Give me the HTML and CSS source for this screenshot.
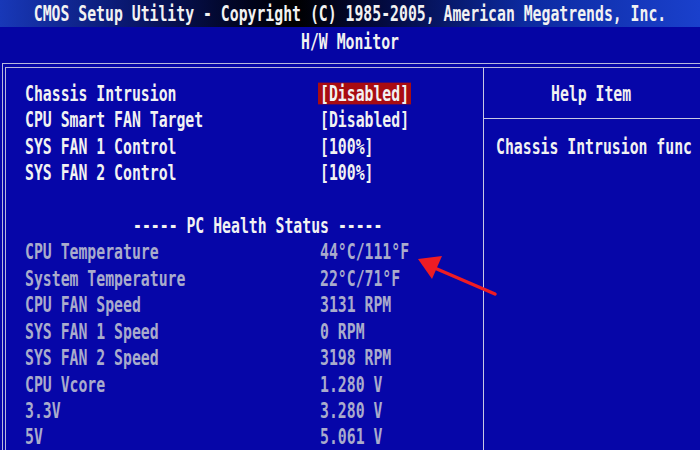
FILE: index.html
```html
<!DOCTYPE html>
<html lang="en">

<head>
  <meta charset="UTF-8">
  <title>H/W Monitor</title>
  <link rel="stylesheet" href="styles.css">
</head>

<body>
  <div id="screen">
    <div class="titlebar">
      <span class="t">CMOS Setup Utility - Copyright (C) 1985-2005, American Megatrends, Inc.</span>
    </div>
    <div class="subbar">
      <span class="t">H/W Monitor</span>
    </div>

    <div class="frame">
      <div class="panel">
        <div class="main">
          <div class="row">
            <span class="label t">Chassis Intrusion</span>
            <span class="value t selected">[Disabled]</span>
          </div>
          <div class="row">
            <span class="label t">CPU Smart FAN Target</span>
            <span class="value t">[Disabled]</span>
          </div>
          <div class="row">
            <span class="label t">SYS FAN 1 Control</span>
            <span class="value t">[100%]</span>
          </div>
          <div class="row">
            <span class="label t">SYS FAN 2 Control</span>
            <span class="value t">[100%]</span>
          </div>
          <div class="row"></div>
          <div class="row heading">
            <span class="t">----- PC Health Status -----</span>
          </div>
          <!-- read-only sensor values -->
          <div class="row status">
            <span class="label t">CPU Temperature</span>
            <span class="value t">44°C/111°F</span>
          </div>
          <div class="row status">
            <span class="label t">System Temperature</span>
            <span class="value t">22°C/71°F</span>
          </div>
          <div class="row status">
            <span class="label t">CPU FAN Speed</span>
            <span class="value t">3131 RPM</span>
          </div>
          <div class="row status">
            <span class="label t">SYS FAN 1 Speed</span>
            <span class="value t">0 RPM</span>
          </div>
          <div class="row status">
            <span class="label t">SYS FAN 2 Speed</span>
            <span class="value t">3198 RPM</span>
          </div>
          <div class="row status">
            <span class="label t">CPU Vcore</span>
            <span class="value t">1.280 V</span>
          </div>
          <div class="row status">
            <span class="label t">3.3V</span>
            <span class="value t">3.280 V</span>
          </div>
          <div class="row status">
            <span class="label t">5V</span>
            <span class="value t">5.061 V</span>
          </div>
        </div>

        <div class="help">
          <div class="help-head"><span class="t">Help Item</span></div>
          <div class="help-body"><span class="t">Chassis Intrusion func</span></div>
        </div>
      </div>
    </div>

    <!-- red annotation arrow -->
    <svg class="arrow" width="700" height="450" viewBox="0 0 700 450">
      <line x1="495" y1="294" x2="430" y2="266" stroke="#ee1c24" stroke-width="3.5" stroke-linecap="round" />
      <polygon points="418,259 442,256 432,279" fill="#ee1c24" />
    </svg>
  </div>
</body>

</html>
```

FILE: styles.css
```css
body {
  margin: 0;
  padding: 0;
  background-color: #0606a8;
  color: #f2f2f2;
  font-family: "DejaVu Sans Mono", "Liberation Mono", monospace;
  font-size: 14.8px;
  font-weight: bold;
  overflow: hidden;
}

#screen {
  position: relative;
  width: 700px;
  height: 450px;
  overflow: hidden;
}

/* text is tall and narrow like the BIOS font */
.t {
  display: inline-block;
  line-height: 15px;
  transform: scaleY(1.45);
  white-space: pre;
}

.titlebar {
  height: 27px;
  display: flex;
  align-items: center;
  justify-content: center;
  background: linear-gradient(90deg, #1838b8 0%, #0a1870 18%, #00031a 36%, #000000 42%, #030a40 55%, #0c2aa0 75%, #1a40cc 100%);
}

.subbar {
  height: 36px;
  display: flex;
  justify-content: center;
  padding-top: 9px;
  box-sizing: border-box;
  background-color: #0505a4;
}

.frame {
  width: 720px;
  margin-left: 2px;
  border: 1px solid #b8b8dc;
  padding: 3px 2px;
}

.panel {
  display: flex;
  border: 1px solid #b8b8dc;
  height: 420px;
}

.main {
  width: 478px;
  padding: 12px 0 0 19px;
  box-sizing: border-box;
  border-right: 1px solid #c8c8e4;
}

.row {
  height: 26.45px;
  display: flex;
  align-items: center;
}

.label {
  width: 295px;
}

.selected {
  background-color: #a80c12;
  padding: 0 2px;
  margin-left: -2px;
}

.heading {
  padding-left: 108px;
}

.status {
  color: #a9abcc;
}

.help {
  flex: 1;
}

.help-head {
  height: 50px;
  display: flex;
  align-items: center;
  padding-left: 67px;
  border-bottom: 1px solid #c8c8e4;
}

.help-body {
  padding: 19px 0 0 12px;
}

.arrow {
  position: absolute;
  left: 0;
  top: 0;
}
```
